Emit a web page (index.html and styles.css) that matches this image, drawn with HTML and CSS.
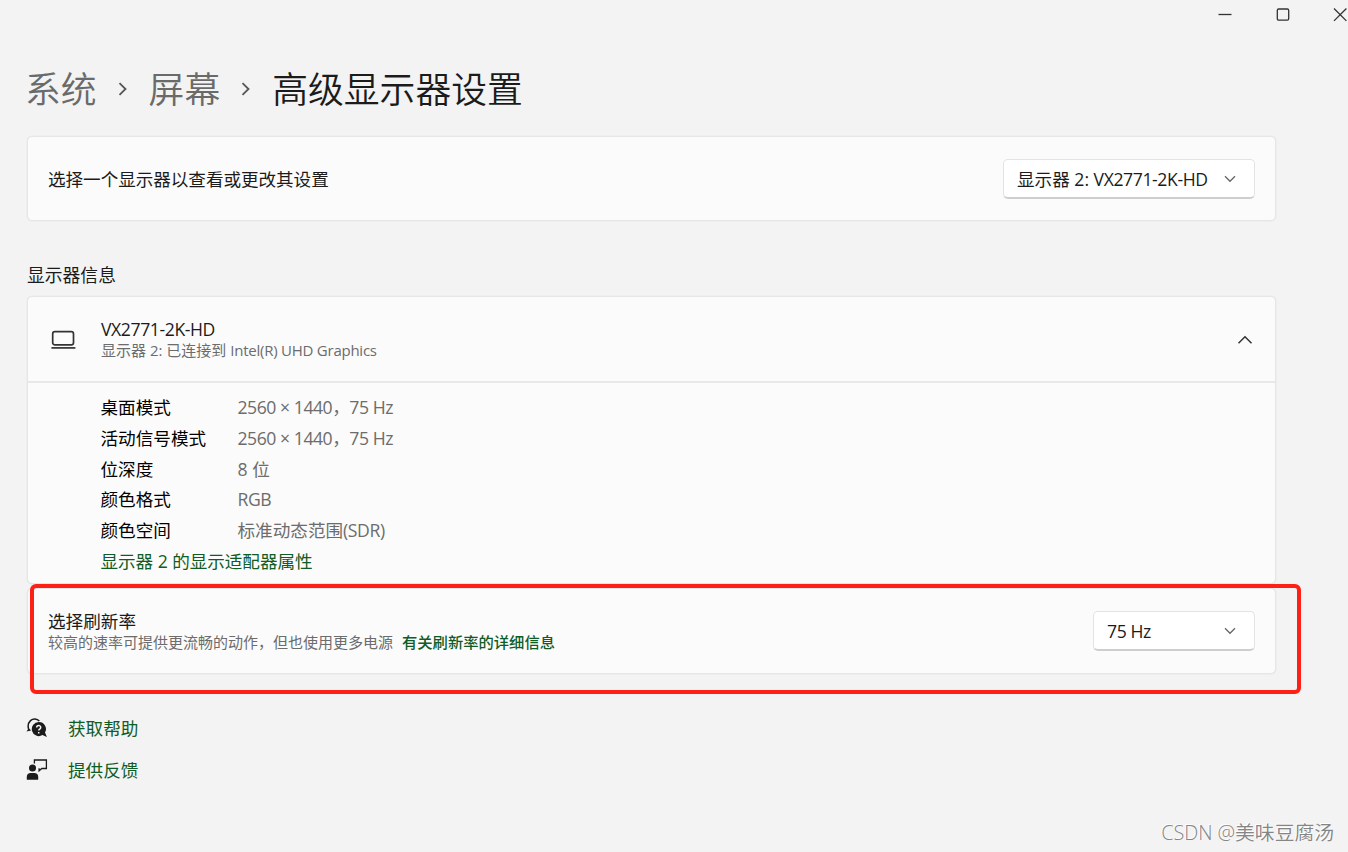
FILE: index.html
```html
<!DOCTYPE html>
<html lang="zh-CN">
<head>
<meta charset="utf-8">
<title>高级显示器设置</title>
<link rel="stylesheet" href="styles.css">
</head>
<body>
<div class="window">
  <header class="titlebar">
    <svg class="cap" viewBox="0 0 16 16"><path d="M1.5 8.5h13"/></svg>
    <svg class="cap" viewBox="0 0 16 16"><rect x="2.300" y="3" width="11.400" height="11.200" rx="1.400"/></svg>
    <svg class="cap" viewBox="0 0 16 16"><path d="M2 2.500l12.400 12.400M14.400 2.500L2 14.900"/></svg>
  </header>

  <nav class="crumbs">
    <span class="crumb">系统</span>
    <svg class="sep" viewBox="0 0 10 16"><path d="M1.500 2.200l6 5.800-6 5.800"/></svg>
    <span class="crumb">屏幕</span>
    <svg class="sep" viewBox="0 0 10 16"><path d="M1.500 2.200l6 5.800-6 5.800"/></svg>
    <h1 class="crumb current">高级显示器设置</h1>
  </nav>

  <main class="content">
    <section class="card row">
      <span class="text">选择一个显示器以查看或更改其设置</span>
      <button class="select wide"><span>显示器 2: <span class="model">VX2771-2K-HD</span></span><svg class="down" viewBox="0 0 12 8"><path d="M1 1.300l5 5 5-5"/></svg></button>
    </section>

    <h2 class="group-title">显示器信息</h2>
    <section class="card info">
      <div class="info-head">
        <svg class="laptop" viewBox="0 0 26 20"><rect x="2.700" y="1.700" width="20.800" height="13.200" rx="2.200"/><path d="M1.400 17.900h24"/></svg>
        <div class="stack device">
          <span class="text model">VX2771-2K-HD</span>
          <span class="sub">显示器 2: 已连接到 <span class="adapter-name">Intel(R) UHD Graphics</span></span>
        </div>
        <svg class="up" viewBox="0 0 16 10"><path d="M1.500 8.300L8 1.800l6.500 6.500"/></svg>
      </div>
      <dl class="details">
        <dt>桌面模式</dt><dd class="mode">2560 × 1440，75 Hz</dd>
        <dt>活动信号模式</dt><dd class="mode">2560 × 1440，75 Hz</dd>
        <dt>位深度</dt><dd>8 位</dd>
        <dt>颜色格式</dt><dd class="model">RGB</dd>
        <dt>颜色空间</dt><dd>标准动态范围<span class="model">(SDR)</span></dd>
      </dl>
      <a class="link adapter">显示器 2 的显示适配器属性</a>
    </section>

    <section class="card row rate">
      <div class="stack">
        <span class="text">选择刷新率</span>
        <span class="sub">较高的速率可提供更流畅的动作，但也使用更多电源<a class="link more">有关刷新率的详细信息</a></span>
      </div>
      <button class="select narrow"><span class="model">75 Hz</span><svg class="down" viewBox="0 0 12 8"><path d="M1 1.300l5 5 5-5"/></svg></button>
    </section>

    <footer class="help">
      <a class="help-link">
        <svg class="help-icon" viewBox="0 0 22 22"><path d="M3 13.500C1.500 9.500 2 6 4.500 3.600 7 1.200 11 1.400 13.300 4" fill="none" stroke="#1b1b1b" stroke-width="1.500"/><path d="M.5 14.500l2.300-3.300 2.300 2.200z"/><path d="M12.800 5.100a7 7 0 1 0 3.600 13l4.500 2-1.900-4.500a7 7 0 0 0-6.200-10.500z"/><path class="question" d="M10.700 10.600c0-2.700 4-2.600 4-.2 0 1.700-2 1.600-2 3.200M12.700 15v1.500"/></svg>
        <span>获取帮助</span>
      </a>
      <a class="help-link">
        <svg class="help-icon" viewBox="0 0 22 22"><circle cx="6.500" cy="8.900" r="3.500"/><path d="M.8 20.800v-2.500q0-4.200 4-4.200h3.400q4 0 4 4.200v2.500z"/><path d="M8.400 4.500V1h12v8.500h-4.600l-2.700 2.300V9.300" fill="none" stroke="#1b1b1b" stroke-width="1.300"/></svg>
        <span>提供反馈</span>
      </a>
    </footer>
  </main>
  <div class="highlight"></div>
  <div class="watermark">CSDN @美味豆腐汤</div>
</div>
</body>
</html>
```
FILE: styles.css
```css
* { box-sizing: border-box; }
body { margin: 0; background: #f3f3f3; color: #1b1b1b; font-family: "Open Sans", "Noto Sans CJK SC", sans-serif; font-size: 17.600px; line-height: 24px; }
h1, h2, dl, dd { margin: 0; font-weight: inherit; }
svg { fill: none; stroke: #333; flex: none; }
.window { position: relative; width: 1348px; height: 852px; overflow: hidden; }
.titlebar { height: 30px; padding: 6px 0 0 1217px; display: flex; gap: 41.500px; }
.cap { width: 16px; height: 16px; stroke-width: 1.300; }
.crumbs { display: flex; align-items: center; height: 60px; margin-top: 29px; padding-left: 25px; font-size: 35.800px; font-weight: 350; line-height: 60px; }
.crumb { color: #6a6a6a; }
.crumb.current { font-size: 35.800px; color: #1b1b1b; }
.sep { width: 10px; height: 16px; margin: 0 21px; stroke: #555; stroke-width: 1.800; }
.content { width: 1249px; margin: 17px 0 0 27px; }
.card { background: #fbfbfb; border: 1.500px solid #e6e6e6; border-radius: 5px; box-shadow: 0 0 0 .5px #e9e9e9; }
.row { display: flex; align-items: center; justify-content: space-between; height: 85px; padding: 0 20px; }
.row > .text { letter-spacing: -.05px; }
.select { display: flex; align-items: center; justify-content: space-between; height: 40px; padding: 1px 18px 0 13px; border: 1px solid #e3e3e3; border-bottom: 2px solid #cecece; border-radius: 5px; background: #fff; color: #1b1b1b; font: inherit; }
.wide { width: 252px; }
.narrow { width: 162px; }
.down { width: 12px; height: 8px; stroke: #666; stroke-width: 1.300; }
.model { letter-spacing: -.4px; }
.adapter-name { letter-spacing: -.24px; }
.mode { letter-spacing: -.45px; }
.group-title { margin: 42px 0 9px; font-size: 17.800px; line-height: 24px; }
.info { height: 288px; }
.info-head { display: flex; align-items: center; height: 86px; padding: 1px 22px 0; border-bottom: 2px solid #e8e8e8; }
.laptop { width: 26px; height: 20px; margin-right: 25px; stroke-width: 1.700; }
.stack { display: flex; flex-direction: column; }
.device { padding-bottom: 2px; }
.stack .text { line-height: 22px; }
.sub { font-size: 15px; line-height: 20px; color: #6c6c6c; }
.up { width: 16px; height: 10px; margin-left: auto; stroke-width: 1.500; }
.details { display: grid; grid-template-columns: 137px 1fr; grid-auto-rows: 30.800px; padding: 9px 0 0 72.500px; line-height: 30px; color: #6c6c6c; }
.details dt { color: #000; }
.link { color: #0f5c25; }
.adapter { display: block; padding-left: 72.500px; line-height: 30px; letter-spacing: -.05px; }
.rate { height: 86px; margin-top: 4px; }
.more { margin-left: 9px; font-weight: 500; font-size: 15.300px; }
.help { display: flex; flex-direction: column; gap: 18px; margin-top: 42px; }
.help-link { display: flex; align-items: center; gap: 20px; height: 24px; color: #0f5c25; }
.help-icon { width: 22px; height: 22px; margin-left: -1px; fill: #1b1b1b; stroke: none; }
.question { fill: none; stroke: #f3f3f3; stroke-width: 1.500; }
.highlight { position: absolute; left: 30px; top: 584px; width: 1271px; height: 109.500px; border: 4px solid #ff2015; border-radius: 6px; }
.watermark { position: absolute; right: 14px; bottom: 6px; color: #858585; font-size: 19.800px; font-weight: 350; line-height: 26px; text-shadow: -1px -1px 0 #fff; }
```
